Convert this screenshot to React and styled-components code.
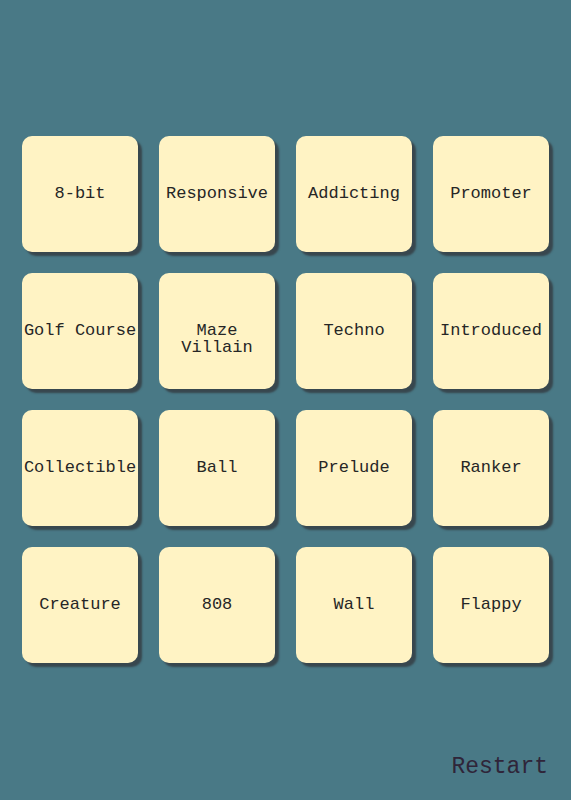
import styled, { createGlobalStyle } from "styled-components";

const words = [
    "8-bit", "Responsive", "Addicting", "Promoter",
    "Golf Course", "Maze Villain", "Techno", "Introduced",
    "Collectible", "Ball", "Prelude", "Ranker",
    "Creature", "808", "Wall", "Flappy",
];

const Global = createGlobalStyle`
    html, body {
        margin: 0;
        padding: 0;
        background-color: #497986;
    }
    * {
        box-sizing: border-box;
    }
`;

export default function App(){
    return(
        <Page>
            <Global />
            <Board>
                {words.map((w) => <Card key={w}>{w}</Card>)}
            </Board>
            <Rodape>
                <Restart>Restart</Restart>
            </Rodape>
        </Page>
    );
};

const Page = styled.div`
        width: 571px;
        height: 800px;
        display: flex;
        flex-direction: column;
        align-items: center;
        padding-top: 136px;
        background-color: #497986;
        font-family: "Liberation Mono", "Courier New", monospace;
`;

const Board = styled.div`
        display: grid;
        grid-template-columns: repeat(4, 116px);
        grid-auto-rows: 116px;
        gap: 21px;
`;

// primeira linha fica no meio do card, a segunda desce
const Card = styled.div`
        display: flex;
        justify-content: center;
        align-items: flex-start;
        text-align: center;
        padding-top: 49px;
        background-color: #fff3c4;
        border-radius: 10px;
        box-shadow: 4px 4px 2px #38474e;
        font-size: 17px;
        line-height: 17px;
        color: #262626;
        overflow: visible;
        cursor: pointer;
`;

const Rodape = styled.div`
        margin-top: auto;
        width: 100%;
        display: flex;
        justify-content: flex-end;
        padding: 0 23px 20px 0;
`;

const Restart = styled.button`
        background: none;
        border: none;
        padding: 0;
        font-family: "Liberation Mono", "Courier New", monospace;
        font-size: 23px;
        line-height: 26px;
        color: #2f2539;
        cursor: pointer;
`;
